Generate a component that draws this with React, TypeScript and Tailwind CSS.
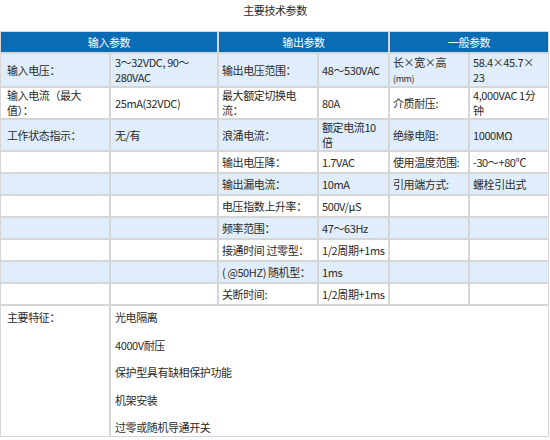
import React from "react";

type Cell = React.ReactNode;

const rows: { tint: boolean; cells: Cell[] }[] = [
  {
    tint: true,
    cells: [
      "输入电压：",
      <>3～32VDC, 90～<br />280VAC</>,
      "输出电压范围：",
      "48～530VAC",
      <>长×宽×高<br /><span className="text-[9px]">(mm)</span></>,
      <>58.4×45.7×<br />23</>,
    ],
  },
  {
    tint: false,
    cells: [
      <>输入电流（最大<br />值）：</>,
      "25mA(32VDC)",
      <>最大额定切换电<br />流：</>,
      "80A",
      "介质耐压:",
      <>4,000VAC 1分<br />钟</>,
    ],
  },
  {
    tint: true,
    cells: ["工作状态指示：", "无/有", "浪涌电流：", <>额定电流10<br />倍</>, "绝缘电阻:", "1000MΩ"],
  },
  { tint: false, cells: ["", "", "输出电压降：", "1.7VAC", "使用温度范围:", "-30～+80℃"] },
  { tint: true, cells: ["", "", "输出漏电流：", "10mA", "引用端方式:", "螺栓引出式"] },
  { tint: false, cells: ["", "", "电压指数上升率：", "500V/μS", "", ""] },
  { tint: true, cells: ["", "", "频率范围：", "47～63Hz", "", ""] },
  { tint: false, cells: ["", "", "接通时间 过零型：", "1/2周期+1ms", "", ""] },
  { tint: true, cells: ["", "", "( @50HZ) 随机型：", "1ms", "", ""] },
  { tint: false, cells: ["", "", "关断时间:", "1/2周期+1ms", "", ""] },
];

const features = ["光电隔离", "4000V耐压", "保护型具有缺相保护功能", "机架安装", "过零或随机导通开关"];

// left padding per column
const pads = ["pl-[6px]", "pl-[4px]", "pl-[3px]", "pl-[3px]", "pl-[3px]", "pl-[3px]"];

export default function App() {
  return (
    <div className="w-[550px] h-[440px] bg-white text-[11px] tracking-[-0.4px] text-[#2a2a2a] font-['Noto_Sans_CJK_SC',sans-serif]">
      <div className="h-[31px] pt-[3px] leading-[15px] text-center">主要技术参数</div>

      <div className="grid w-[549px] grid-cols-[108px_106px_98px_69px_78px_78px] grid-rows-[20px_32px_30px_30px_20px_20px_20px_20px_20px_20px_20px_130px] gap-[2px] p-px bg-[#d6d6d6]">
        {/* header */}
        {["输入参数", "输出参数", "一般参数"].map((h) => (
          <div key={h} className="col-span-2 flex items-center justify-center bg-[#0a6cb4] text-white">
            {h}
          </div>
        ))}

        {rows.map((r, i) =>
          r.cells.map((c, j) => (
            <div
              key={`${i}-${j}`}
              className={`flex items-center whitespace-nowrap leading-[15px] ${pads[j]} ${r.tint ? "bg-[#e0eefb]" : "bg-white"}`}
            >
              <div>{c}</div>
            </div>
          ))
        )}

        {/* main features */}
        <div className="bg-white pl-[6px] pt-[4px] leading-[15px]">主要特征：</div>
        <div className="col-span-5 bg-white pl-[4px] pt-[4px] flex flex-col gap-[12.5px] leading-[15px]">
          {features.map((f) => (
            <div key={f}>{f}</div>
          ))}
        </div>
      </div>
    </div>
  );
}
